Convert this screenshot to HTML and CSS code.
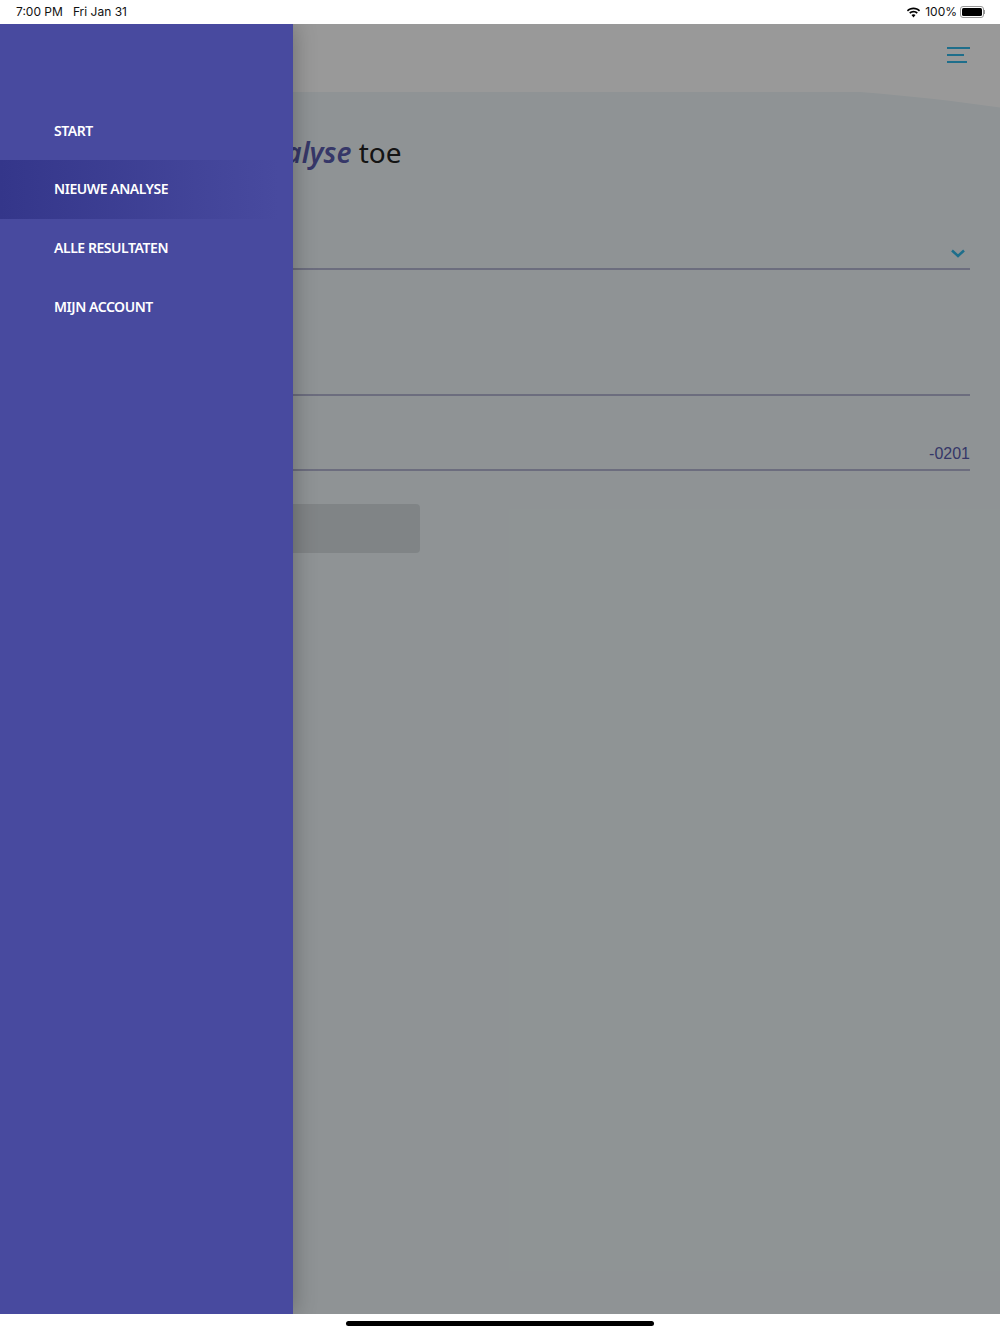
FILE: index.html
```html
<!DOCTYPE html>
<html lang="nl">

<head>
    <meta charset="UTF-8">
    <meta name="viewport" content="width=device-width, initial-scale=1.0">
    <title>Nieuwe analyse</title>
    <link rel="stylesheet" href="styles.css">
</head>

<body>

    <div class="status-bar">
        <div class="status-left">
            <span>7:00 PM</span>
            <span>Fri Jan 31</span>
        </div>
        <div class="status-right">
            <svg class="wifi" width="15" height="11" viewBox="0 0 15 11">
                <path d="M7.500 2.200c2.100 0 4 .8 5.500 2.200l1.100-1.200C12.300 1.500 10 .5 7.500.5S2.700 1.500.9 3.200L2 4.400c1.500-1.400 3.400-2.200 5.500-2.200z" />
                <path d="M7.500 5.400c1.200 0 2.300.5 3.200 1.300l1.100-1.200c-1.100-1.100-2.700-1.800-4.300-1.800s-3.200.7-4.300 1.800l1.100 1.200c.9-.8 2-1.300 3.200-1.300z" />
                <path d="M7.500 7.200c-.8 0-1.500.3-2 .8l2 2.400 2-2.400c-.5-.5-1.200-.8-2-.8z" />
            </svg>
            <span>100%</span>
            <div class="battery">
                <div class="battery-level"></div>
            </div>
            <div class="battery-cap"></div>
        </div>
    </div>

    <div class="app">
        <div class="page">
            <div class="header">
                <div class="burger">
                    <span class="burger-long"></span>
                    <span class="burger-short"></span>
                    <span class="burger-mid"></span>
                </div>
                <svg class="wave" width="1000" height="16" viewBox="0 0 1000 16">
                    <path d="M860 0C910 4 955 9 1000 15.500V0Z" />
                </svg>
            </div>

            <h1 class="title">Voeg een nieuwe <em>analyse</em> toe</h1>

            <div class="field field-select">
                <svg class="chevron" width="14" height="9" viewBox="0 0 14 9">
                    <path d="M1 1.500L7 7l6-5.500" />
                </svg>
            </div>
            <div class="field field-text"></div>
            <div class="field field-date">-0201</div>

            <div class="submit"></div>
        </div>

        <div class="overlay"></div>

        <div class="drawer">
            <div class="menu-item">START</div>
            <div class="menu-item active">NIEUWE ANALYSE</div>
            <div class="menu-item">ALLE RESULTATEN</div>
            <div class="menu-item">MIJN ACCOUNT</div>
        </div>
    </div>

    <div class="home-area">
        <div class="home-bar"></div>
    </div>

</body>

</html>
```

FILE: styles.css
```css
body {
    margin: 0;
    width: 1000px;
    height: 1334px;
    overflow: hidden;
    background-color: #fff;
    font-family: "Liberation Sans", Arial, sans-serif;
}

.status-bar {
    height: 24px;
    box-sizing: border-box;
    display: flex;
    justify-content: space-between;
    align-items: center;
    padding: 0 15px 1px 16px;
    font-family: Inter, "Liberation Sans", sans-serif;
    font-size: 12px;
    color: #111;
}

.status-left {
    display: flex;
    gap: 10px;
}

.status-right {
    display: flex;
    align-items: center;
    gap: 3px;
}

.wifi {
    margin: 1px 1px 0 0;
    fill: #000;
}

.battery {
    width: 24px;
    height: 12px;
    box-sizing: border-box;
    border: 1px solid #999;
    border-radius: 3px;
    padding: 1px;
}

.battery-level {
    height: 100%;
    background-color: #000;
    border-radius: 1.500px;
}

.battery-cap {
    width: 1px;
    height: 4px;
    margin-left: -3px;
    background-color: #999;
}

.app {
    position: relative;
    height: 1290px;
    overflow: hidden;
}

.page {
    height: 100%;
    background-color: #eef6f9;
}

.header {
    position: relative;
    height: 68px;
    background-color: #fff;
}

.wave {
    position: absolute;
    top: 100%;
    left: 0;
    fill: #fff;
}

.burger {
    position: absolute;
    top: 23px;
    right: 30px;
    width: 23px;
}

.burger span {
    display: block;
    height: 2px;
    margin-bottom: 5px;
    background-color: #33b8e8;
}

.burger-short {
    width: 17px;
}

.burger-mid {
    width: 20px;
}

.title {
    margin: 0;
    padding: 40px 20px 0;
    font-family: "Noto Sans", "Open Sans", sans-serif;
    font-size: 28px;
    font-weight: 400;
    line-height: 40px;
    white-space: nowrap;
    color: #222;
}

.title em {
    font-weight: 600;
    color: #5a5cae;
}

.field {
    margin: 0 30px;
    box-sizing: border-box;
    border-bottom: 2px solid #b4b6d2;
    display: flex;
    justify-content: flex-end;
    align-items: flex-end;
}

.field-select {
    height: 98px;
    padding: 0 5px 10px 0;
}

.chevron {
    display: block;
    fill: none;
    stroke: #33b8e8;
    stroke-width: 2.500;
}

.field-text {
    height: 126px;
}

.field-date {
    height: 75px;
    padding-bottom: 5px;
    font-size: 16px;
    line-height: 20px;
    color: #5a5cae;
}

.submit {
    width: 390px;
    height: 49px;
    margin: 33px 0 0 30px;
    background-color: #d6dde0;
    border-radius: 4px;
}

.overlay {
    position: absolute;
    top: 0;
    left: 0;
    right: 0;
    bottom: 0;
    background-color: rgba(0, 0, 0, 0.4);
}

.drawer {
    position: absolute;
    top: 0;
    left: 0;
    bottom: 0;
    width: 293px;
    box-sizing: border-box;
    padding-top: 77.800px;
    background-color: #484a9f;
    box-shadow: 0 0 22px rgba(0, 0, 0, 0.3);
}

.menu-item {
    height: 58.600px;
    line-height: 58.600px;
    padding-left: 54px;
    font-family: "Noto Sans", "Open Sans", sans-serif;
    font-size: 14px;
    font-weight: 600;
    letter-spacing: -0.450px;
    white-space: nowrap;
    color: #fff;
}

.menu-item.active {
    background: linear-gradient(to right, #34368a, #484a9f 95%);
}

.home-area {
    height: 20px;
    display: flex;
    justify-content: center;
    padding-top: 7px;
    box-sizing: border-box;
}

.home-bar {
    width: 308px;
    height: 5px;
    background-color: #000;
    border-radius: 3px;
}
```
